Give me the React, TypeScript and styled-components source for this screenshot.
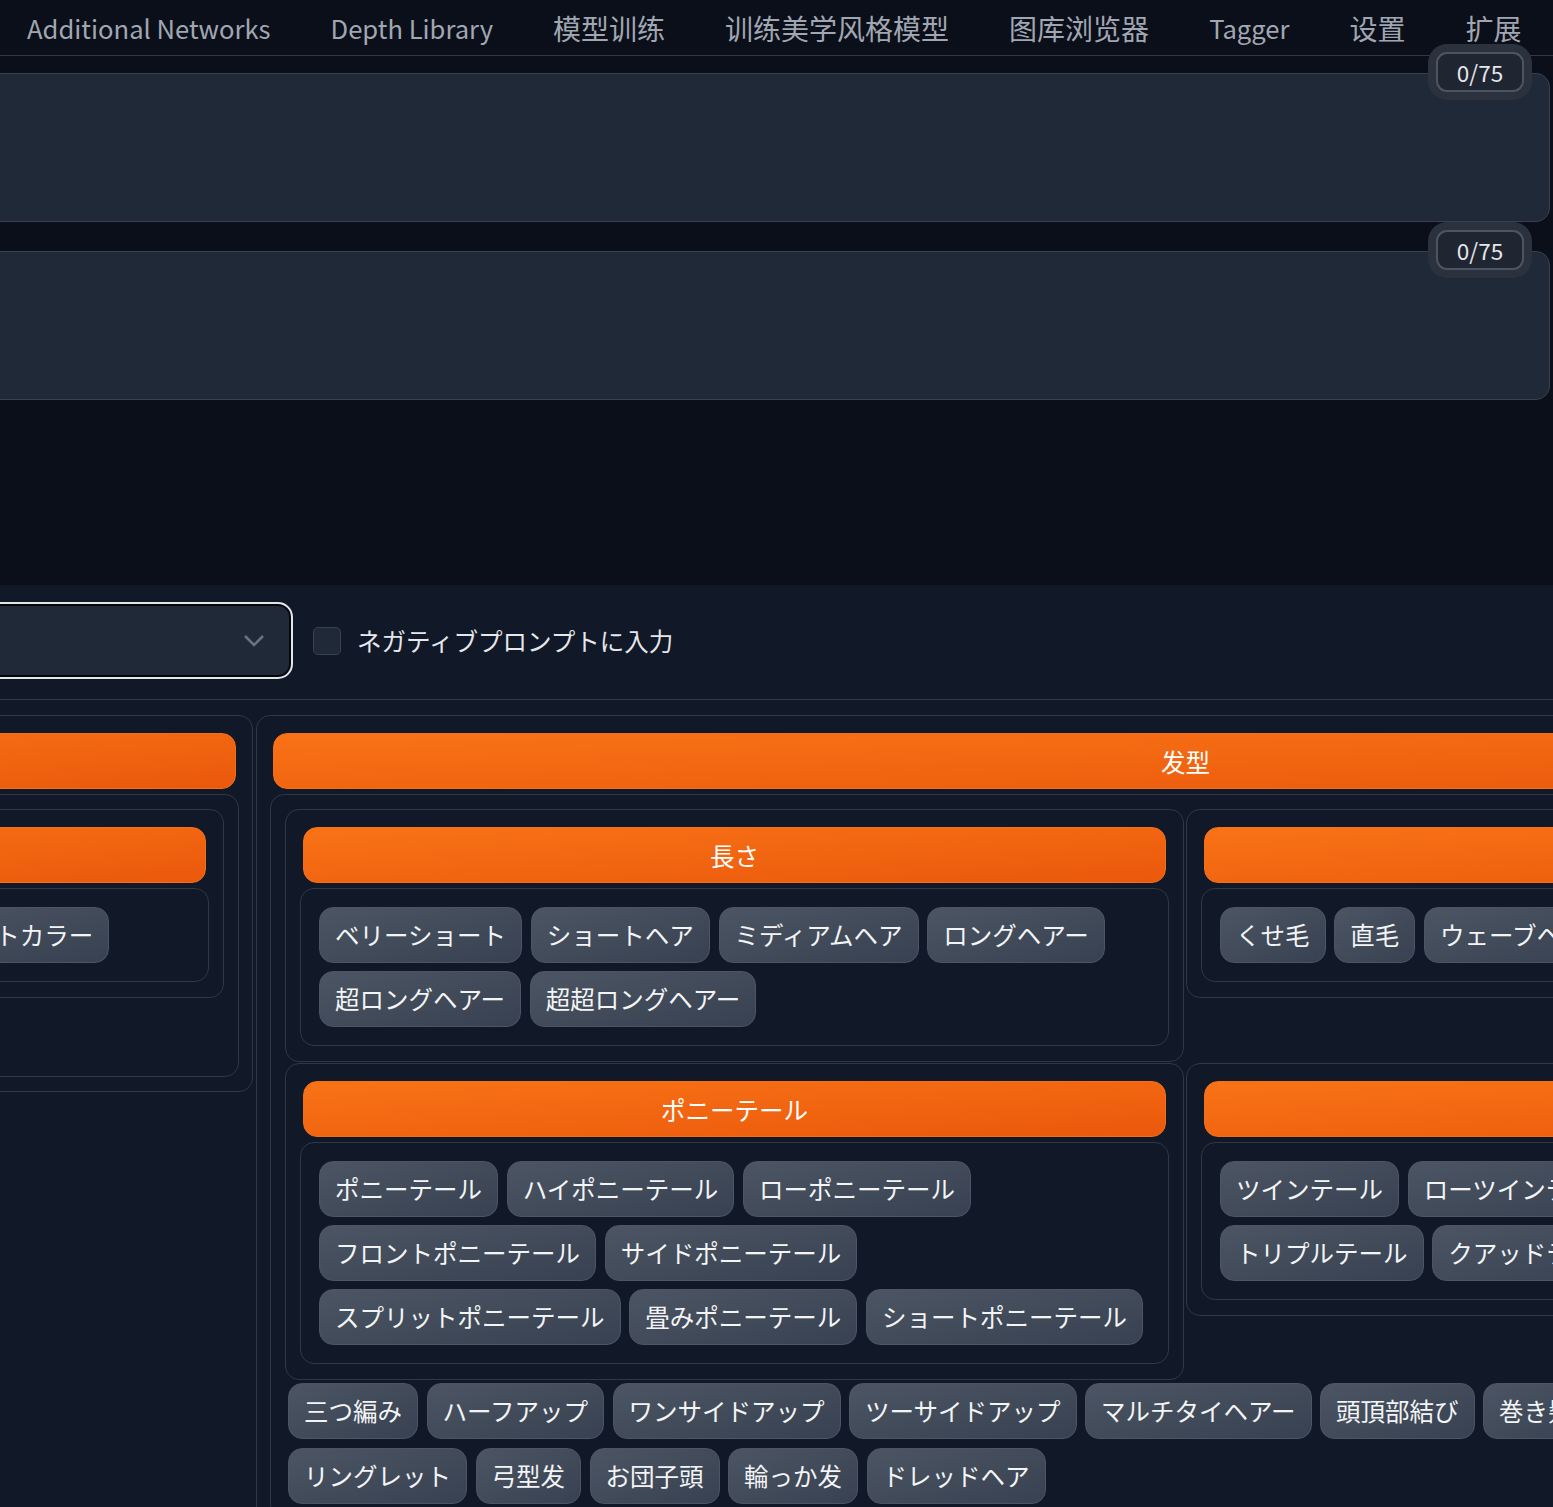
import styled, { createGlobalStyle } from 'styled-components';

const LINE = '#2f3847';
const JP = '"Noto Sans CJK JP", "Noto Sans", sans-serif';
const SC = '"Noto Sans CJK SC", "Noto Sans", sans-serif';

const tabs = [
  'Additional Networks',
  'Depth Library',
  '模型训练',
  '训练美学风格模型',
  '图库浏览器',
  'Tagger',
  '设置',
  '扩展',
];

const groups = [
  {
    title: '長さ',
    tags: ['ベリーショート', 'ショートヘア', 'ミディアムヘア', 'ロングヘアー', '超ロングヘアー', '超超ロングヘアー'],
  },
  {
    title: '髪質',
    tags: ['くせ毛', '直毛', 'ウェーブヘア', 'カーリーヘア'],
  },
  {
    title: 'ポニーテール',
    tags: [
      'ポニーテール',
      'ハイポニーテール',
      'ローポニーテール',
      'フロントポニーテール',
      'サイドポニーテール',
      'スプリットポニーテール',
      '畳みポニーテール',
      'ショートポニーテール',
    ],
  },
  {
    title: 'ツインテール',
    tags: ['ツインテール', 'ローツインテール', 'ハイツインテール', 'トリプルテール', 'クアッドテール'],
  },
];

const looseTags = [
  '三つ編み',
  'ハーフアップ',
  'ワンサイドアップ',
  'ツーサイドアップ',
  'マルチタイヘアー',
  '頭頂部結び',
  '巻き髪',
  'ツインドリル',
  'シニヨン',
  'リングレット',
  '弓型发',
  'お団子頭',
  '輪っか发',
  'ドレッドヘア',
];

const isLatin = (s: string) => /^[\x20-\x7e]+$/.test(s);

function App() {
  return (
    <Page>
      <GlobalStyle />
      <TabBar>
        <TabList>
          {tabs.map((t) => (
            <Tab key={t} $latin={isLatin(t)}>
              {t}
            </Tab>
          ))}
        </TabList>
      </TabBar>

      <PromptArea>
        <PromptBox>
          <Counter>0/75</Counter>
        </PromptBox>
        <PromptBox>
          <Counter>0/75</Counter>
        </PromptBox>
      </PromptArea>

      <Lower>
        <ControlRow>
          <Dropdown>
            <svg width="22" height="14" viewBox="0 0 22 14">
              <polyline points="2,2 11,11 20,2" fill="none" stroke="#6b7280" strokeWidth="2.6" />
            </svg>
          </Dropdown>
          <Checkbox />
          <CheckLabel>ネガティブプロンプトに入力</CheckLabel>
        </ControlRow>
        <Divider />

        <PanelsRow>
          <Panel $width={646}>
            <Header>髪色</Header>
            <Body $minHeight={283}>
              <Block>
                <Header>カラー</Header>
                <TagBox>
                  <Tag>グラデーション</Tag>
                  <Tag>ハイライトカラー</Tag>
                </TagBox>
              </Block>
            </Body>
          </Panel>

          <Panel $width={1859}>
            <Header>发型</Header>
            <Body>
              <BlockGrid>
                {groups.map((g) => (
                  <Block key={g.title}>
                    <Header>{g.title}</Header>
                    <TagBox>
                      {g.tags.map((t) => (
                        <Tag key={t}>{t}</Tag>
                      ))}
                    </TagBox>
                  </Block>
                ))}
              </BlockGrid>
              <LooseTags>
                {looseTags.map((t) => (
                  <Tag key={t}>{t}</Tag>
                ))}
              </LooseTags>
            </Body>
          </Panel>
        </PanelsRow>
      </Lower>
    </Page>
  );
}

export default App;

const GlobalStyle = createGlobalStyle`
  html, body {
    margin: 0;
    padding: 0;
    background: #111827;
  }
  body {
    font-family: ${JP};
    overflow: hidden;
  }
  * {
    box-sizing: border-box;
  }
`;

const Page = styled.div`
  width: 1553px;
  height: 1507px;
  overflow: hidden;
  background: #111827;
`;

const TabBar = styled.div`
  height: 56px;
  background: #0b0f19;
  border-bottom: 1px solid ${LINE};
  overflow: hidden;
`;

const TabList = styled.div`
  display: flex;
  margin-left: -3px;
  height: 100%;
  align-items: center;
`;

const Tab = styled.div<{ $latin?: boolean }>`
  flex-shrink: 0;
  padding: 0 30px;
  font-family: ${SC};
  font-size: ${(p) => (p.$latin ? '25.6px' : '28px')};
  line-height: 1;
  color: #a1a7b2;
  white-space: nowrap;
`;

const PromptArea = styled.div`
  display: flex;
  flex-direction: column;
  gap: 29px;
  padding: 17px 3px 185px 0;
  background: #0b0f19;
`;

const PromptBox = styled.div`
  position: relative;
  height: 149px;
  margin-left: -20px;
  background: #1f2937;
  border: 1px solid #374151;
  border-radius: 14px;
`;

const Counter = styled.div`
  position: absolute;
  top: -22px;
  right: 25px;
  width: 88px;
  height: 40px;
  display: flex;
  align-items: center;
  justify-content: center;
  background: #1f2631;
  border: 2px solid #4b5563;
  border-radius: 11px;
  box-shadow: 0 0 0 8px #2b323e;
  font-family: ${SC};
  font-size: 22.5px;
  color: #e5e7eb;
`;

const Lower = styled.div`
  padding-top: 17px;
  background: #111827;
`;

const ControlRow = styled.div`
  display: flex;
  align-items: center;
  height: 77px;
  margin-left: -40px;
`;

const Dropdown = styled.div`
  width: 333px;
  height: 77px;
  display: flex;
  align-items: center;
  justify-content: flex-end;
  padding-right: 26px;
  background: #1f2937;
  border: 2px solid #e2e5ea;
  border-radius: 15px;
  box-shadow: inset 0 0 0 2px #05070a;
`;

const Checkbox = styled.div`
  width: 28px;
  height: 28px;
  margin-left: 20px;
  background: #1f2937;
  border: 1px solid #374151;
  border-radius: 5px;
`;

const CheckLabel = styled.span`
  margin-left: 16px;
  font-size: 24.5px;
  color: #e5e7eb;
  white-space: nowrap;
`;

const Divider = styled.div`
  margin-top: 20px;
  height: 1px;
  background: ${LINE};
`;

const PanelsRow = styled.div`
  display: flex;
  align-items: flex-start;
  gap: 3px;
  margin-top: 15px;
  margin-left: -393px;
`;

const Panel = styled.div<{ $width: number }>`
  flex-shrink: 0;
  width: ${(p) => p.$width}px;
  padding: 17px 16px 14px;
  border: 1px solid ${LINE};
  border-radius: 14px;
`;

const Header = styled.div`
  height: 56px;
  display: flex;
  align-items: center;
  justify-content: center;
  border: 1px solid #f47018;
  border-radius: 14px;
  background: linear-gradient(to bottom right, #f97316, #ea580c);
  color: #ffffff;
  font-size: 24.5px;
  white-space: nowrap;
`;

const Body = styled.div<{ $minHeight?: number }>`
  margin: 5px -3px 0;
  padding: 14px;
  min-height: ${(p) => (p.$minHeight ? `${p.$minHeight}px` : 'auto')};
  border: 1px solid ${LINE};
  border-radius: 14px;
`;

const BlockGrid = styled.div`
  display: grid;
  grid-template-columns: 899px 899px;
  column-gap: 2px;
  row-gap: 1px;
  align-items: start;
`;

const Block = styled.div`
  padding: 17px 17px 15px;
  border: 1px solid ${LINE};
  border-radius: 14px;
`;

const TagBox = styled.div`
  display: flex;
  flex-wrap: wrap;
  gap: 8px 8.75px;
  margin: 5px -3px 0;
  padding: 18px;
  border: 1px solid ${LINE};
  border-radius: 14px;
`;

const LooseTags = styled.div`
  display: flex;
  flex-wrap: wrap;
  gap: 9px 8.5px;
  margin-top: 3px;
  padding-left: 3px;
`;

const Tag = styled.div`
  flex-shrink: 0;
  height: 56px;
  display: flex;
  align-items: center;
  padding: 0 15px;
  border: 1px solid #4b5563;
  border-radius: 14px;
  background: linear-gradient(to bottom right, #4b5563, #374151);
  color: #f3f4f6;
  font-size: 24.5px;
  line-height: 1;
  white-space: nowrap;
`;
